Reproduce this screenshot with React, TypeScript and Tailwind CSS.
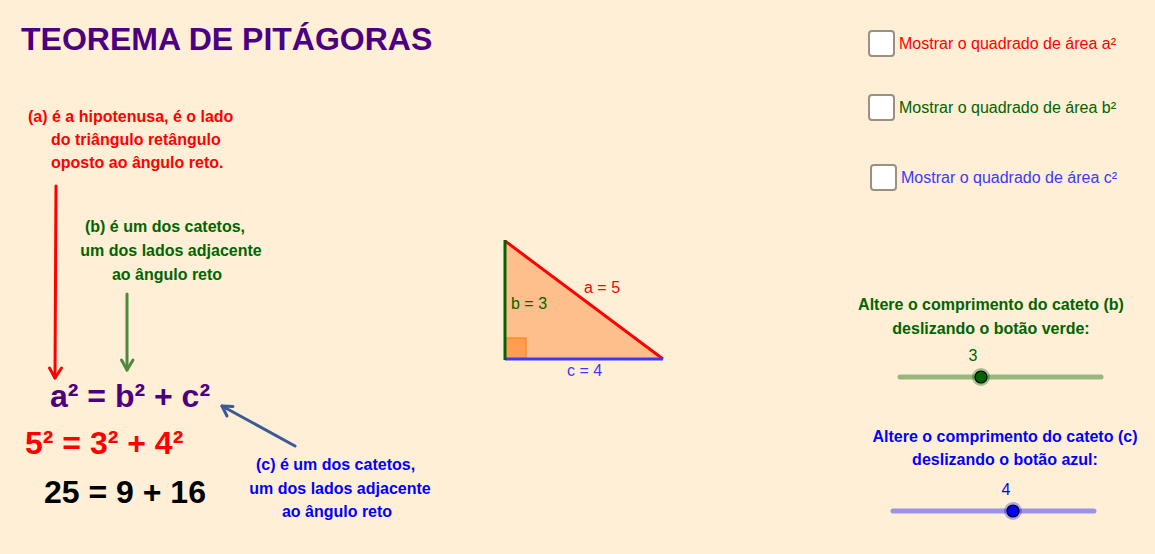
import React from 'react';

const font = "font-['Liberation_Sans',Arial,sans-serif]";

function CheckRow({ label, color, className = '' }: { label: string; color: string; className?: string }) {
  return (
    <div className={`flex items-center gap-1 ${className}`}>
      <div className="h-[27px] w-[27px] rounded-[4px] border-2 border-[#9c9080] bg-white" />
      <span className={`text-[16px] leading-none ${color}`}>{label}</span>
    </div>
  );
}

function Track({ knob, track, fill, halo, className }: { knob: number; track: string; fill: string; halo: string; className: string }) {
  const width = 201;
  return (
    <svg className={className} width={width + 24} height={24}>
      <line x1={12} y1={12} x2={width + 12} y2={12} stroke={track} strokeWidth={5} strokeLinecap="round" />
      <circle cx={knob + 10} cy={12} r={9} fill={halo} />
      <circle cx={knob + 10} cy={12} r={6} fill={fill} stroke="#000" strokeWidth={1.2} />
    </svg>
  );
}

export default function App() {
  return (
    <div className={`relative h-[554px] w-[1155px] overflow-hidden bg-[#ffefd6] ${font}`}>
      {/* drawing: arrows and triangle */}
      <svg className="absolute left-0 top-0" width={1155} height={554}>
        <g stroke="#ff0000" strokeWidth={3} fill="none" strokeLinecap="round" strokeLinejoin="round">
          <line x1={56} y1={186} x2={55} y2={378} />
          <polyline points="49.5,368 55,378 61.5,368" />
        </g>
        <g stroke="#4f8a3c" strokeWidth={3} fill="none" strokeLinecap="round" strokeLinejoin="round">
          <line x1={127} y1={294} x2={127} y2={370} />
          <polyline points="121.5,360 127,370 133,360" />
        </g>
        <g stroke="#3c5a98" strokeWidth={3} fill="none" strokeLinecap="round" strokeLinejoin="round">
          <line x1={295} y1={446} x2={222} y2={406} />
          <polyline points="233,406.5 222,406 227,416" />
        </g>

        <polygon points="505,241 505,359 663,359" fill="#ffbf8c" />
        <rect x={505} y={338} width={21} height={21} fill="#ff9e52" stroke="#ff7a00" strokeWidth={1} />
        <line x1={505} y1={241} x2={663} y2={359} stroke="#ff0000" strokeWidth={3} />
        <line x1={505} y1={359} x2={663} y2={359} stroke="#3a3aff" strokeWidth={3} />
        <line x1={505} y1={240} x2={505} y2={360} stroke="#006400" strokeWidth={3} />
      </svg>

      <h1 className="absolute left-[21px] top-[23px] text-[32px] font-bold leading-none text-[#4b0082]">
        TEOREMA DE PITÁGORAS
      </h1>

      {/* (a) note */}
      <div className="absolute left-[28px] top-[105px] text-[16px] font-bold leading-[23px] text-[#ff0000]">
        <p>(a) é a hipotenusa, é o lado</p>
        <p className="pl-[23px]">do triângulo retângulo</p>
        <p className="pl-[23px]">oposto ao ângulo reto.</p>
      </div>

      {/* (b) note */}
      <div className="absolute left-[71px] top-[215px] w-[200px] text-center text-[16px] font-bold leading-[24px] text-[#006400]">
        <p className="pr-[12px]">(b) é um dos catetos,</p>
        <p>um dos lados adjacente</p>
        <p className="pr-[8px]">ao ângulo reto</p>
      </div>

      {/* (c) note */}
      <div className="absolute left-[240px] top-[453px] w-[200px] text-center text-[16px] font-bold leading-[23.5px] text-[#0000ff]">
        <p className="pr-[9px]">(c) é um dos catetos,</p>
        <p>um dos lados adjacente</p>
        <p className="pr-[6px]">ao ângulo reto</p>
      </div>

      {/* formulas */}
      <div className="absolute left-[25px] top-[380px] flex flex-col items-start text-[32px] font-bold leading-none">
        <span className="ml-[25px] text-[#4b0082]">a² = b² + c²</span>
        <span className="mt-[15px] text-[#ff0000]">5² = 3² + 4²</span>
        <span className="ml-[19px] mt-[17px] text-black">25 = 9 + 16</span>
      </div>

      {/* triangle labels */}
      <span className="absolute left-[584px] top-[280px] text-[16px] leading-none text-[#ff0000]">a = 5</span>
      <span className="absolute left-[511px] top-[296px] text-[16px] leading-none text-[#006400]">b = 3</span>
      <span className="absolute left-[567px] top-[363px] text-[16px] leading-none text-[#3a3aff]">c = 4</span>

      {/* checkboxes */}
      <div className="absolute left-[868px] top-[30px] flex flex-col items-start">
        <CheckRow color="text-[#ff0000]" label="Mostrar o quadrado de área a²" />
        <CheckRow className="mt-[37px]" color="text-[#006400]" label="Mostrar o quadrado de área b²" />
        <CheckRow className="ml-[2px] mt-[43px]" color="text-[#3a3aff]" label="Mostrar o quadrado de área c²" />
      </div>

      {/* slider b */}
      <div className="absolute left-[841px] top-[293px] flex w-[300px] flex-col items-center text-[16px] leading-[24px] text-[#006400]">
        <p className="font-bold">Altere o comprimento do cateto (b)</p>
        <p className="font-bold">deslizando o botão verde:</p>
        <span className="mt-[3px] pr-[36px]">3</span>
        <Track className="-mt-[3px] ml-[19px]" knob={83} track="#98b77f" fill="#006400" halo="rgba(0,100,0,0.35)" />
      </div>

      {/* slider c */}
      <div className="absolute left-[855px] top-[425px] flex w-[300px] flex-col items-center text-[16px] leading-[23px] text-[#0000ff]">
        <p className="font-bold">Altere o comprimento do cateto (c)</p>
        <p className="font-bold">deslizando o botão azul:</p>
        <span className="mt-[7px] pl-[2px] leading-[24px]">4</span>
        <Track className="-mt-[3px] mr-[23px]" knob={122} track="#9b93e4" fill="#0000ff" halo="rgba(0,0,255,0.3)" />
      </div>
    </div>
  );
}
